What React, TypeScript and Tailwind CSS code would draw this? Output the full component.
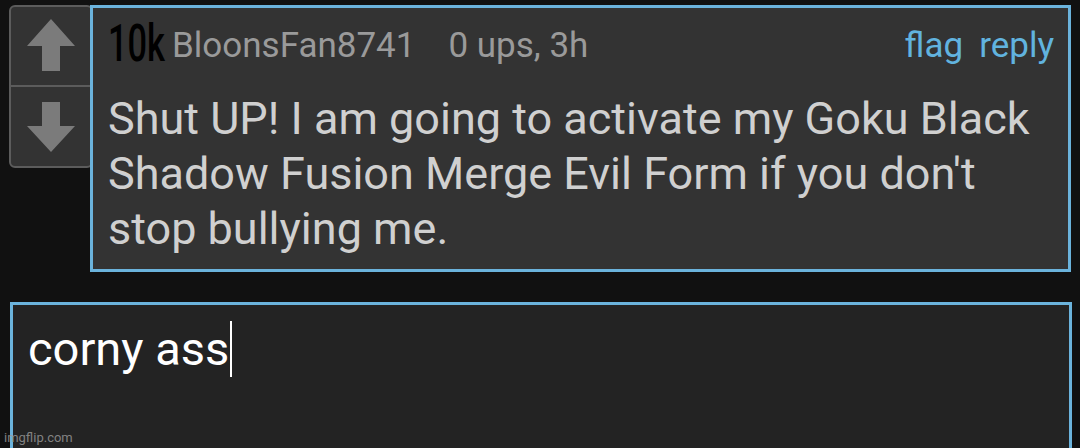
export default function App() {
  return (
    <div className="relative h-[448px] w-[1080px] overflow-hidden bg-[#111111] font-['Roboto',sans-serif]">
      <div className="flex items-start pt-[5px] pl-[9px] pr-[9px]">
        {/* vote box */}
        <div className="flex h-[163px] w-[84px] shrink-0 flex-col rounded-[6px] border-2 border-[#5c5c5c] bg-[#333333]">
          <button className="flex h-[80px] items-center justify-center border-b-2 border-[#5c5c5c]">
            <svg width="50" height="54" viewBox="0 0 50 54">
              <path d="M25 0 L49 27 L34 27 L34 52 L16 52 L16 27 L1 27 Z" fill="#7b7b7b" />
            </svg>
          </button>
          <button className="flex flex-1 items-center justify-center">
            <svg width="50" height="50" viewBox="0 0 50 50">
              <path d="M16 0 L34 0 L34 24 L49 24 L25 50 L1 24 L16 24 Z" fill="#7b7b7b" />
            </svg>
          </button>
        </div>
        {/* comment */}
        <div className="-ml-[3px] flex h-[267px] flex-1 flex-col border-[3px] border-[#6bb3dc] bg-[#333333] pl-[15px] pr-[14px]">
          <div className="flex items-baseline pt-[12px]">
            <span className="inline-block w-[64px] origin-left translate-y-[4px] scale-x-[0.66] text-[52px] font-medium leading-[40px] text-black">10k</span>
            <span className="text-[35px] leading-[40px] text-[#9a9a9a]">BloonsFan8741</span>
            <span className="ml-[33px] text-[35px] leading-[40px] text-[#9a9a9a]">0 ups, 3h</span>
            <span className="ml-auto text-[35px] leading-[40px] text-[#61b3df]">flag</span>
            <span className="ml-[16px] text-[35px] leading-[40px] text-[#61b3df]">reply</span>
          </div>
          <p className="mt-[25px] text-[45px] leading-[55px] text-[#d0d0d0]">
            Shut UP! I am going to activate my Goku Black Shadow Fusion Merge Evil Form if you don't stop bullying me.
          </p>
        </div>
      </div>
      {/* reply box */}
      <div className="mt-[30px] ml-[10px] mr-[8px] h-[160px] border-[3px] border-[#6bb3dc] bg-[#232323] px-[15px] pt-[16px]">
        <div className="flex items-center">
          <span className="text-[47px] leading-[56px] text-white">corny ass</span>
          <span className="ml-[1px] h-[56px] w-[2px] bg-white" />
        </div>
      </div>
      <span className="absolute bottom-[1px] left-[4px] text-[13px] text-[#9a9a9a] opacity-80">imgflip.com</span>
    </div>
  );
}
